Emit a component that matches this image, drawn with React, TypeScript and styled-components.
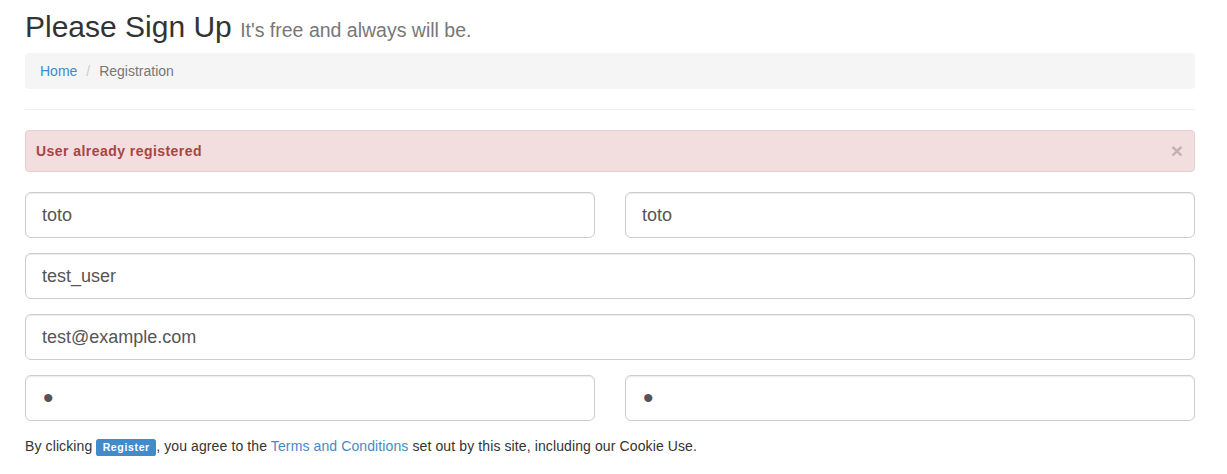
import React from "react";
import styled, { createGlobalStyle } from "styled-components";

const Global = createGlobalStyle`
  html, body { margin: 0; padding: 0; background: #fff; }
  body {
    font-family: "Liberation Sans", Arial, Helvetica, sans-serif;
    font-size: 14px;
    line-height: 1.42857143;
    color: #333;
  }
  * { box-sizing: border-box; }
`;

const Page = styled.div`
  padding: 10px 25px 0 25px;
  width: 1220px;
`;

const Title = styled.h2`
  margin: 0 0 10px 0;
  font-size: 30px;
  font-weight: 500;
  line-height: 1.1;
  color: #333;
`;

const Small = styled.small`
  font-size: 65%;
  font-weight: 400;
  color: #777;
`;

const Breadcrumb = styled.ol`
  display: flex;
  list-style: none;
  margin: 0 0 20px 0;
  padding: 8px 15px;
  background: #f5f5f5;
  border-radius: 4px;
  line-height: 20px;
`;

const Crumb = styled.li<{ $active?: boolean }>`
  color: ${(p) => (p.$active ? "#777" : "#428bca")};
`;

const Separator = styled.li`
  margin-left: 4px;
  padding: 0 5px;
  color: #ccc;
  &::after { content: "/\\00a0"; }
`;

const Link = styled.a`
  color: #428bca;
  text-decoration: none;
`;

const Rule = styled.hr`
  margin: 0 0 20px 0;
  border: 0;
  border-top: 1px solid #eee;
`;

const Alert = styled.div`
  display: flex;
  align-items: center;
  justify-content: space-between;
  padding: 10px 11px 10px 10px;
  margin-bottom: 20px;
  border: 1px solid #ebccd1;
  border-radius: 4px;
  background: #f2dede;
  color: #a94442;
  font-weight: 700;
  line-height: 20px;
  letter-spacing: 0.45px;
`;

const Close = styled.button`
  background: none;
  border: 0;
  padding: 0;
  font-family: inherit;
  font-size: 21px;
  font-weight: 700;
  line-height: 20px;
  height: 20px;
  color: #000;
  opacity: 0.2;
  cursor: pointer;
`;

const Row = styled.div`
  display: grid;
  grid-template-columns: 1fr 1fr;
  column-gap: 30px;
`;

const Group = styled.div`
  margin-bottom: 15px;
`;

const Input = styled.input<{ $secret?: boolean }>`
  display: block;
  width: 100%;
  height: 46px;
  padding: ${(p) => (p.$secret ? "0 16px 0 17px" : "10px 16px")};
  font-family: inherit;
  font-size: ${(p) => (p.$secret ? "30px" : "18px")};
  line-height: 1.33;
  color: #555;
  background: #fff;
  border: 1px solid #ccc;
  border-radius: 6px;
  box-shadow: inset 0 1px 1px rgba(0, 0, 0, 0.075);
  outline: none;
`;

const Terms = styled.p`
  margin: 0;
  line-height: 20px;
  letter-spacing: 0.11px;
`;

const Label = styled.span`
  display: inline-block;
  padding: 0.25em 0.6em 0.3em;
  font-size: 75%;
  font-weight: 700;
  line-height: 1;
  letter-spacing: 0.65px;
  color: #fff;
  background: #428bca;
  border-radius: 0.25em;
  vertical-align: baseline;
  text-align: center;
  white-space: nowrap;
`;

export default function App() {
  return (
    <>
      <Global />
      <Page>
        <Title>
          Please Sign Up <Small>It's free and always will be.</Small>
        </Title>
        <Breadcrumb>
          <Crumb>
            <Link href="#">Home</Link>
          </Crumb>
          <Separator aria-hidden="true" />
          <Crumb $active>Registration</Crumb>
        </Breadcrumb>
        <Rule />
        <Alert>
          <span>User already registered</span>
          <Close aria-label="close">×</Close>
        </Alert>
        <Row>
          <Group>
            <Input type="text" defaultValue="toto" />
          </Group>
          <Group>
            <Input type="text" defaultValue="toto" />
          </Group>
        </Row>
        <Group>
          <Input type="text" defaultValue="test_user" />
        </Group>
        <Group>
          <Input type="email" defaultValue="test@example.com" />
        </Group>
        <Row>
          <Group>
            <Input type="password" $secret defaultValue="a" />
          </Group>
          <Group>
            <Input type="password" $secret defaultValue="a" />
          </Group>
        </Row>
        <Terms>
          By clicking <Label>Register</Label>, you agree to the{" "}
          <Link href="#">Terms and Conditions</Link> set out by this site, including our Cookie Use.
        </Terms>
      </Page>
    </>
  );
}
